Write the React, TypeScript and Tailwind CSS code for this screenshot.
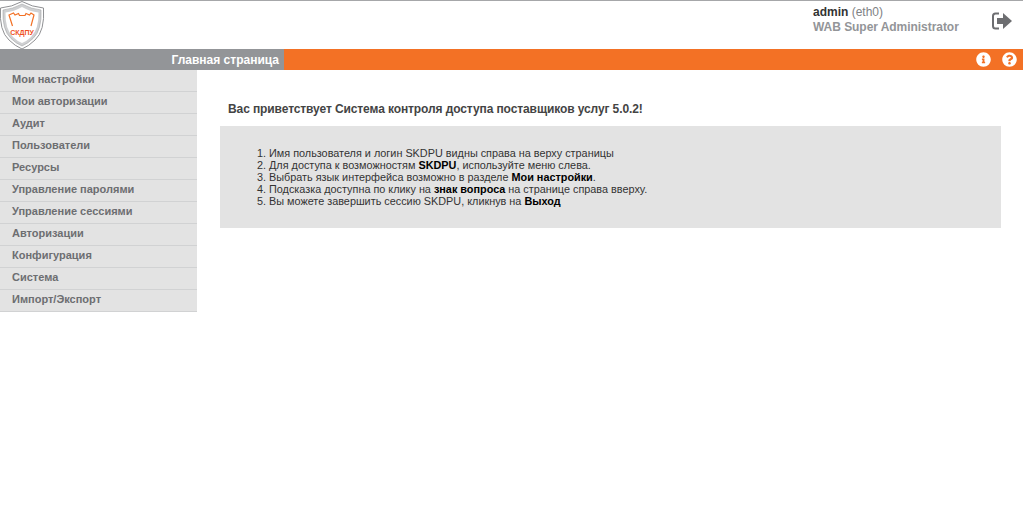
import { FaInfoCircle, FaQuestionCircle } from "react-icons/fa";

const menu = [
  "Мои настройки",
  "Мои авторизации",
  "Аудит",
  "Пользователи",
  "Ресурсы",
  "Управление паролями",
  "Управление сессиями",
  "Авторизации",
  "Конфигурация",
  "Система",
  "Импорт/Экспорт",
];

function Logo() {
  return (
    <svg width="45" height="49" viewBox="0 0 45 49" fill="none">
      <path d="M22 0.5 Q32 6 43.5 7 Q45 30 35 39 Q29 45 22 48 Q15 45 9 39 Q-1 30 0.5 7 Q12 6 22 0.5 Z" fill="#fff" stroke="#8f9093" strokeWidth="1" />
      <path d="M22 3 Q31 8 41 9 Q42 29 33 37.5 Q28 42.5 22 45 Q16 42.5 11 37.5 Q2 29 3 9 Q13 8 22 3 Z" fill="#cfd0d2" stroke="#a3a4a6" strokeWidth="0.6" />
      <path d="M22 6 Q30 10.5 38.5 11.5 Q39 28 31 36 Q27 40 22 42 Q17 40 13 36 Q5 28 5.5 11.5 Q14 10.5 22 6 Z" fill="#fff" />
      <path d="M12.5 25 L9 14 L13.5 12 L15 14 L18.5 12.5 L19.5 14.5 L25 14.5 L26 12.5 L29.5 14 L31 12 L34 14 L31 25" stroke="#f27126" strokeWidth="1.2" />
      <text x="22" y="33.5" textAnchor="middle" fontSize="7" fontWeight="700" fill="#ef4f23" fontFamily="'Liberation Sans', sans-serif">СКДПУ</text>
    </svg>
  );
}

function ExitIcon() {
  return (
    <svg width="20" height="18" viewBox="0 0 20 18" fill="none">
      <path d="M7 1.5 H3.5 Q1 1.5 1 4 V14 Q1 16.5 3.5 16.5 H7" stroke="#6d6e71" strokeWidth="2" />
      <path d="M5 6 H11 V1 L20 9 L11 17 V12 H5 Z" fill="#6d6e71" />
    </svg>
  );
}

export default function App() {
  return (
    <div className="min-h-[528px] w-[1023px] bg-white font-['Liberation_Sans',Arial,sans-serif]">
      {/* шапка */}
      <header className="flex h-[49px] border-t border-[#a6a7a9]">
        <div className="w-[45px]">
          <Logo />
        </div>
        <div className="ml-[768px] w-[165px] pt-[4px] text-[12px] leading-[15px] font-bold text-[#939598]">
          <div>
            <span className="text-[#333333]">admin</span> <span className="font-normal text-[#808285]">(eth0)</span>
          </div>
          <div className="tracking-[-0.05px] whitespace-nowrap">WAB Super Administrator</div>
        </div>
        <div className="ml-[14px] pt-[11px]">
          <ExitIcon />
        </div>
      </header>

      {/* полоса навигации */}
      <div className="flex h-[21px]">
        <div className="flex w-[284px] items-center justify-end bg-[#939598] pr-[5px] text-[12px] font-bold text-white">
          Главная страница
        </div>
        <div className="flex flex-1 items-center justify-end gap-[11px] bg-[#f37125] pr-[6px] text-white">
          <FaInfoCircle size={15} />
          <FaQuestionCircle size={15} />
        </div>
      </div>

      <div className="flex">
        {/* меню */}
        <nav className="w-[197px] shrink-0">
          {menu.map((item) => (
            <div
              key={item}
              className="flex h-[22px] items-center border-b border-[#d1d2d3] bg-[#e3e3e3] pb-[2px] pl-[12px] text-[11px] font-bold text-[#6d6e71]"
            >
              {item}
            </div>
          ))}
        </nav>

        {/* контент */}
        <main className="ml-[23px] w-[781px] pt-[32px]">
          <h1 className="pl-[8px] text-[12px] leading-[15px] font-bold tracking-[-0.1px] text-[#444444]">
            Вас приветствует Система контроля доступа поставщиков услуг 5.0.2!
          </h1>
          <div className="mt-[9px] h-[102px] bg-[#e3e3e3] pt-[21px] pl-[37px] text-[10.85px] leading-[12px] text-[#333333]">
            <ol className="list-decimal pl-[12px]">
              <li>Имя пользователя и логин SKDPU видны справа на верху страницы</li>
              <li>
                Для доступа к возможностям <b className="text-black">SKDPU</b>, используйте меню слева.
              </li>
              <li>
                Выбрать язык интерфейса возможно в разделе <b className="text-black">Мои настройки</b>.
              </li>
              <li>
                Подсказка доступна по клику на <b className="text-black">знак вопроса</b> на странице справа вверху.
              </li>
              <li>
                Вы можете завершить сессию SKDPU, кликнув на <b className="text-black">Выход</b>
              </li>
            </ol>
          </div>
        </main>
      </div>
    </div>
  );
}
